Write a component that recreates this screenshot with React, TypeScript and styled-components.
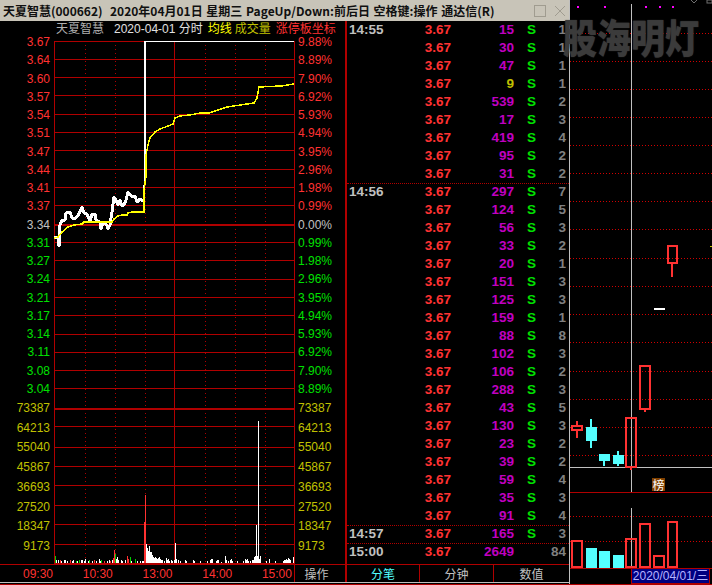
import styled, { createGlobalStyle } from "styled-components";

const RED = "#ff3232";
const GRID = "#b00000";
const GREEN = "#00e000";
const YELLOW = "#c0c000";
const MAGENTA = "#c000c0";
const GRAY = "#808080";
const SILVER = "#c0c0c0";
const CYAN = "#54ffff";

const GlobalStyle = createGlobalStyle`
  html, body {
    margin: 0;
    padding: 0;
    background: #000;
  }
`;

const Root = styled.div`
  position: relative;
  display: flex;
  width: 712px;
  height: 585px;
  box-sizing: border-box;
  overflow: hidden;
  background: #000;
  border-bottom: 1px solid ${GRID};
  font-family: "Liberation Sans", "Noto Sans CJK SC", sans-serif;
  font-size: 12px;
`;

const Popup = styled.div`
  display: flex;
  flex-direction: column;
  flex: none;
  width: 570px;
  height: 584px;
  box-sizing: border-box;
  padding-bottom: 1px;
  border-right: 1px solid ${SILVER};
`;

const TitleBar = styled.div`
  display: flex;
  align-items: center;
  flex: none;
  height: 21px;
  box-sizing: border-box;
  padding-left: 3px;
  background: #c8c4b8;
  color: #101010;
  font-family: "Noto Sans CJK SC", sans-serif;
  font-size: 12px;
  font-weight: 700;
  word-spacing: 1px;
  white-space: pre;
`;

const TitleControls = styled.div`
  display: flex;
  align-items: center;
  gap: 8px;
  margin-left: auto;
  padding-right: 3px;
`;

const Body = styled.div`
  display: flex;
  flex: none;
  height: 543px;
`;

const MinutePane = styled.div`
  display: flex;
  flex: none;
  width: 347px;
  box-sizing: border-box;
  border-right: 2px solid ${GRID};
`;

const Axis = styled.div<{ $side: "left" | "right" }>`
  display: flex;
  flex-direction: column;
  flex: none;
  width: ${(p) => (p.$side === "left" ? "54px" : "50px")};
  box-sizing: border-box;
  padding-top: 15px;
  ${(p) => (p.$side === "left" ? "padding-right: 4px; text-align: right;" : "padding-left: 3px;")}
`;

const AxisGroup = styled.div<{ $height: number; $gap?: number }>`
  display: flex;
  flex-direction: column;
  justify-content: space-between;
  height: ${(p) => p.$height}px;
  margin-top: ${(p) => p.$gap ?? 0}px;
`;

const AxisLabel = styled.div<{ $color: string }>`
  height: 12px;
  line-height: 12px;
  color: ${(p) => p.$color};
`;

const ChartColumn = styled.div`
  flex: none;
  width: 241px;
`;

const ChartHeader = styled.div`
  display: flex;
  align-items: center;
  height: 20px;
  box-sizing: border-box;
  padding: 0 0 4px 2px;
  line-height: 14px;
  white-space: nowrap;
`;

const HeaderText = styled.span<{ $color: string; $gap: number }>`
  flex: none;
  margin-right: ${(p) => p.$gap}px;
  color: ${(p) => p.$color};
`;

const ChartSvg = styled.svg`
  display: block;
`;

const TickPane = styled.div`
  flex: 1;
  min-width: 0;
`;

const TickRow = styled.div<{ $divided?: boolean }>`
  display: grid;
  grid-template-columns: 72px 33px 62px 21px 31px;
  height: 18px;
  box-sizing: border-box;
  line-height: 18px;
  font-size: 13.5px;
  font-weight: 700;
  ${(p) => p.$divided && `border-top: 1px dotted ${GRID}; line-height: 16px;`}
`;

const TickTime = styled.span`
  padding-left: 2px;
  color: ${SILVER};
`;

const TickPrice = styled.span`
  color: ${RED};
  text-align: right;
  padding-right: 1px;
`;

const TickVolume = styled.span<{ $small?: boolean }>`
  color: ${(p) => (p.$small ? YELLOW : MAGENTA)};
  text-align: right;
`;

const TickSide = styled.span`
  padding-left: 13px;
  color: ${GREEN};
`;

const TickCount = styled.span`
  color: ${GRAY};
  text-align: right;
`;

const Footer = styled.div`
  display: flex;
  flex: none;
  height: 19px;
  box-sizing: border-box;
  border-top: 1px solid ${GRID};
  border-bottom: 1px solid ${SILVER};
`;

const TimeBar = styled.div`
  display: flex;
  flex: none;
  width: 347px;
  box-sizing: border-box;
  border-right: 2px solid ${GRID};
`;

const TimeLabels = styled.div`
  display: flex;
  justify-content: space-between;
  align-items: center;
  flex: none;
  width: 295px;
  box-sizing: border-box;
  padding: 0 2px 0 23px;
  border-right: 1px solid ${GRID};
  color: ${RED};
`;

const FooterCell = styled.div<{ $color: string; $divider?: boolean; $inset?: number }>`
  display: flex;
  align-items: center;
  justify-content: center;
  flex: 1;
  padding-right: ${(p) => p.$inset ?? 0}px;
  color: ${(p) => p.$color};
  font-family: "Noto Sans CJK SC", sans-serif;
  ${(p) => p.$divider && `border-right: 1px solid ${GRID};`}
`;

const TickTabs = styled.div`
  display: grid;
  flex: 1;
  grid-template-columns: 73px 74px 1fr;
`;

const KlinePanel = styled.div`
  position: relative;
  flex: 1;
  min-width: 0;
`;

const Watermark = styled.div`
  position: absolute;
  left: 563px;
  top: 11px;
  color: rgba(60, 60, 60, 0.92);
  font-family: "Noto Sans CJK SC", sans-serif;
  font-size: 34px;
  font-weight: 900;
  line-height: 50px;
  white-space: nowrap;
  text-shadow: 0 0 1px rgba(60, 60, 60, 0.9);
  transform: scaleY(1.18);
  pointer-events: none;
`;

const RankBadge = styled.div`
  position: absolute;
  left: 82px;
  top: 478px;
  width: 13px;
  height: 13px;
  background: #804000;
  color: #fff;
  font-family: "Noto Sans CJK SC", sans-serif;
  font-size: 12px;
  line-height: 13px;
  text-align: center;
`;

const DateBadge = styled.div`
  position: absolute;
  left: 61px;
  top: 568px;
  width: 79px;
  height: 16px;
  box-sizing: border-box;
  border: 1px solid ${GRID};
  background: #000080;
  color: #b4b4ff;
  line-height: 14px;
  text-align: center;
  white-space: nowrap;
`;

const prices = ["3.67", "3.64", "3.60", "3.57", "3.54", "3.51", "3.47", "3.44", "3.41", "3.37", "3.34", "3.31", "3.27", "3.24", "3.21", "3.17", "3.14", "3.11", "3.08", "3.04"];
const percents = ["9.88%", "8.89%", "7.90%", "6.92%", "5.93%", "4.94%", "3.95%", "2.96%", "1.98%", "0.99%", "0.00%", "0.99%", "1.98%", "2.96%", "3.95%", "4.94%", "5.93%", "6.92%", "7.90%", "8.89%"];
const volumes = ["73387", "64213", "55040", "45867", "36693", "27520", "18347", "9173"];

const priceColor = (i: number) => (i < 10 ? RED : i === 10 ? SILVER : GREEN);

type Tick = [time: string, volume: number, side: string, count: number, divided?: boolean];

const ticks: Tick[] = [
  ["14:55", 15, "S", 1], ["", 30, "S", 1], ["", 47, "S", 1], ["", 9, "S", 1], ["", 539, "S", 2],
  ["", 17, "S", 3], ["", 419, "S", 4], ["", 95, "S", 2], ["", 31, "S", 2],
  ["14:56", 297, "S", 7, true], ["", 124, "S", 5], ["", 56, "S", 3], ["", 33, "S", 2], ["", 20, "S", 1],
  ["", 151, "S", 3], ["", 125, "S", 3], ["", 159, "S", 1], ["", 88, "S", 8], ["", 102, "S", 3],
  ["", 106, "S", 2], ["", 288, "S", 3], ["", 43, "S", 5], ["", 130, "S", 3], ["", 23, "S", 2],
  ["", 39, "S", 2], ["", 59, "S", 4], ["", 35, "S", 3], ["", 91, "S", 4],
  ["14:57", 165, "S", 3, true], ["15:00", 2649, "", 84, true],
];

const priceLines = [59, 77, 95, 114, 132, 150, 169, 187, 205, 242, 260, 279, 297, 315, 334, 352, 370, 388, 426, 447, 466, 485, 505, 524, 544];
const dottedX = [85, 115, 145, 205, 235, 265];

const whiteMorning = "54,237 58,237 59,246 60,225 62,220 65,220 66,213 70,212 72,218 76,218 79,214 82,207 84,213 87,214 90,221 92,214 95,214 96,220 100,222 101,229 103,222 107,225 108,229 110,225 112,212 114,197 116,200 118,205 120,200 122,206 124,205 126,200 128,192 131,196 135,196 137,202 140,199 143,201 144,200";
const whiteAfternoon = "144,200 145,170 145,41 294,41";
const yellowPath = "54,238 58,237 62,232 68,227 74,225 82,224 84,222 95,222 112,222 114,219 118,216 122,215 127,215 128,213 132,212 144,212 144,190 146,176 146,155 148,145 150,138 155,132 160,129 168,126 173,124 175,118 180,116 190,115 200,113 209,113 227,107 254,103 257,98 259,87 281,86 294,84";

// [x, height, colour] of the minute volume bars
const W = "#fff";
const R = RED;
const G = "#00d000";
const bars: [number, number, string][] = [
  [55, 7, G], [56, 3, W], [58, 3, W], [60, 3, R], [61, 2, W], [64, 3, W], [65, 3, W], [67, 2, W], [70, 3, R], [72, 2, W], [73, 3, W],
  [76, 2, G], [77, 2, W], [79, 3, G], [81, 3, W], [82, 3, W], [84, 2, W], [85, 4, W], [88, 2, W], [89, 3, G], [92, 2, W], [94, 3, R],
  [96, 2, W], [99, 4, W], [100, 2, W], [101, 3, G], [104, 2, R], [107, 2, W], [109, 3, W], [110, 2, R], [112, 3, W],
  [113, 5, R], [114, 13, R], [115, 9, G], [116, 4, W], [117, 6, W], [118, 3, W], [121, 3, W], [122, 2, W], [125, 3, W],
  [127, 7, R], [128, 4, R], [130, 6, G], [131, 2, W], [135, 4, G], [137, 2, W], [140, 2, W], [142, 2, W],
  [143, 2, W], [144, 41, R], [145, 68, R], [146, 19, W], [147, 15, W], [148, 12, W], [149, 17, W], [150, 11, W], [151, 11, W],
  [152, 8, W], [153, 6, W], [154, 5, W], [155, 6, W], [156, 5, W], [157, 4, W], [158, 5, W], [159, 6, W], [160, 4, W], [161, 3, W],
  [162, 3, W], [164, 2, W], [166, 5, W], [167, 3, W], [168, 4, W], [169, 2, W], [171, 3, W], [172, 2, W], [174, 3, W], [175, 20, W],
  [176, 4, W], [178, 3, W], [180, 2, W], [185, 3, W], [186, 2, W], [193, 3, W], [194, 2, W], [200, 2, W], [207, 2, W], [210, 3, W],
  [211, 4, W], [212, 4, W], [216, 2, W], [217, 3, W], [218, 3, W], [221, 1, W], [225, 7, W], [226, 3, W], [228, 2, W],
  [230, 3, W], [231, 4, W], [232, 2, W], [237, 2, W], [243, 2, W], [245, 4, W], [246, 3, W], [247, 4, W], [248, 2, W],
  [250, 2, W], [252, 3, W], [253, 3, W], [254, 6, W], [255, 7, W], [256, 38, W], [257, 7, W], [258, 142, W], [259, 4, W], [260, 7, W],
  [266, 2, W], [269, 4, W], [275, 2, W], [283, 2, W], [284, 3, W], [285, 3, W], [286, 4, W], [287, 3, W], [288, 5, W], [289, 4, W], [290, 3, W], [293, 6, W],
];

const klineRows = [33, 61, 89, 117, 145, 173, 201, 229, 258, 286, 314, 342, 371, 399, 427, 455, 516, 541];

function MinuteChart() {
  return (
    <ChartSvg width={241} height={523} viewBox="54 41 241 523" shapeRendering="crispEdges">
      {priceLines.map((y) => (
        <rect key={y} x={54} y={y} width={241} height={1} fill={GRID} />
      ))}
      <rect x={54} y={41} width={241} height={1} fill={GRID} />
      <rect x={54} y={224} width={241} height={2} fill={GRID} />
      <rect x={54} y={408} width={241} height={2} fill={GRID} />
      <rect x={54} y={563} width={241} height={1} fill={GRID} />
      {dottedX.map((x) => (
        <line key={x} x1={x + 0.5} x2={x + 0.5} y1={41} y2={564} stroke={GRID} strokeDasharray="1 3" />
      ))}
      <rect x={54} y={41} width={1} height={523} fill={GRID} />
      <rect x={174} y={41} width={1} height={523} fill={GRID} />
      <rect x={294} y={41} width={1} height={523} fill={GRID} />
      {bars.map(([x, h, c]) => (
        <rect key={x} x={x} y={563 - h} width={1} height={h} fill={c} />
      ))}
      <polyline points={whiteMorning} fill="none" stroke="#fff" strokeWidth={3} strokeLinejoin="round" />
      <polyline points={whiteAfternoon} fill="none" stroke="#fff" strokeWidth={2} />
      <polyline points={yellowPath} fill="none" stroke="#ffff00" strokeWidth={1.5} />
    </ChartSvg>
  );
}

// hollow red candle, given its outer box
function HollowBox({ x, y, w, h }: { x: number; y: number; w: number; h: number }) {
  return <rect x={x + 1} y={y + 1} width={w - 2} height={h - 2} fill="none" stroke={RED} strokeWidth={2} />;
}

function KlineChart() {
  return (
    <svg width={142} height={584} viewBox="570 0 142 584" style={{ display: "block" }}>
      {klineRows.map((y) => (
        <line key={y} x1={570} x2={712} y1={y + 0.5} y2={y + 0.5} stroke="#d00000" strokeDasharray="1 2" />
      ))}
      {[577, 604, 645, 659, 672].map((x) => (
        <rect key={x} x={x} y={6} width={2} height={2} fill="#ff00ff" />
      ))}
      <polyline points="691,0 694,3 697,0" fill="none" stroke="#707070" />
      <rect x={707} y={0} width={5} height={3} fill="none" stroke="#707070" />
      <rect x={631} y={4} width={1} height={488} fill={SILVER} />
      <rect x={631} y={508} width={1} height={60} fill={SILVER} />
      <rect x={570} y={467} width={142} height={1} fill={SILVER} />
      <rect x={570} y={492} width={142} height={1} fill={GRID} />
      <rect x={570} y={568} width={142} height={1} fill={GRID} />

      <rect x={576} y={421} width={2} height={17} fill={RED} />
      <rect x={571} y={425} width={12} height={6} fill="#000" />
      <HollowBox x={571} y={425} w={12} h={6} />
      <rect x={590} y={419} width={2} height={29} fill={CYAN} />
      <rect x={586} y={427} width={11} height={14} fill={CYAN} />
      <rect x={603} y={454} width={2} height={12} fill={CYAN} />
      <rect x={599} y={454} width={11} height={7} fill={CYAN} />
      <rect x={617} y={451} width={2} height={15} fill={CYAN} />
      <rect x={613} y={455} width={11} height={9} fill={CYAN} />
      <rect x={630} y={467} width={2} height={3} fill={RED} />
      <HollowBox x={625} y={417} w={12} h={51} />
      <HollowBox x={639} y={365} w={12} h={45} />
      <rect x={644} y={410} width={2} height={2} fill={RED} />
      <rect x={654} y={308} width={11} height={2} fill="#fff" />
      <HollowBox x={667} y={245} w={11} h={19} />
      <rect x={671} y={264} width={2} height={13} fill={RED} />
      <rect x={710} y={246} width={2} height={1} fill={YELLOW} />

      <HollowBox x={571} y={540} w={12} h={28} />
      <rect x={586} y={548} width={11} height={20} fill={CYAN} />
      <rect x={599} y={551} width={11} height={17} fill={CYAN} />
      <rect x={613} y={555} width={11} height={13} fill={CYAN} />
      <HollowBox x={625} y={538} w={12} h={30} />
      <HollowBox x={639} y={523} w={12} h={45} />
      <HollowBox x={653} y={555} w={12} h={13} />
      <HollowBox x={667} y={521} w={11} h={47} />
    </svg>
  );
}

export default function App() {
  return (
    <Root>
      <GlobalStyle />
      <Popup>
        <TitleBar>
          天夏智慧(000662)  2020年04月01日 星期三 PageUp/Down:前后日 空格键:操作 通达信(R)
          <TitleControls>
            <svg width={12} height={12} viewBox="0 0 12 12">
              <rect x={0.5} y={0.5} width={11} height={11} fill="none" stroke="#a09c90" />
            </svg>
            <svg width={12} height={12} viewBox="0 0 12 12">
              <path d="M1 1 L11 11 M11 1 L1 11" stroke="#a09c90" />
            </svg>
          </TitleControls>
        </TitleBar>
        <Body>
          <MinutePane>
            <Axis $side="left">
              <AxisGroup $height={359}>
                {prices.map((p, i) => (
                  <AxisLabel key={i} $color={priceColor(i)}>{p}</AxisLabel>
                ))}
              </AxisGroup>
              <AxisGroup $height={150} $gap={7}>
                {volumes.map((v) => (
                  <AxisLabel key={v} $color={YELLOW}>{v}</AxisLabel>
                ))}
              </AxisGroup>
            </Axis>
            <ChartColumn>
              <ChartHeader>
                <HeaderText $color="#b0b0b0" $gap={10}>天夏智慧</HeaderText>
                <HeaderText $color="#e0e0e0" $gap={5}>2020-04-01 分时</HeaderText>
                <HeaderText $color="#ffff00" $gap={3}>均线</HeaderText>
                <HeaderText $color={YELLOW} $gap={5}>成交量</HeaderText>
                <HeaderText $color={RED} $gap={0}>涨停板坐标</HeaderText>
              </ChartHeader>
              <MinuteChart />
            </ChartColumn>
            <Axis $side="right">
              <AxisGroup $height={359}>
                {percents.map((p, i) => (
                  <AxisLabel key={i} $color={priceColor(i)}>{p}</AxisLabel>
                ))}
              </AxisGroup>
              <AxisGroup $height={150} $gap={7}>
                {volumes.map((v) => (
                  <AxisLabel key={v} $color={YELLOW}>{v}</AxisLabel>
                ))}
              </AxisGroup>
            </Axis>
          </MinutePane>
          <TickPane>
            {ticks.map(([time, volume, side, count, divided], i) => (
              <TickRow key={i} $divided={divided}>
                <TickTime>{time}</TickTime>
                <TickPrice>3.67</TickPrice>
                <TickVolume $small={volume < 10}>{volume}</TickVolume>
                <TickSide>{side}</TickSide>
                <TickCount>{count}</TickCount>
              </TickRow>
            ))}
          </TickPane>
        </Body>
        <Footer>
          <TimeBar>
            <TimeLabels>
              <span>09:30</span>
              <span>10:30</span>
              <span>13:00</span>
              <span>14:00</span>
              <span>15:00</span>
            </TimeLabels>
            <FooterCell $color={SILVER} $inset={7}>操作</FooterCell>
          </TimeBar>
          <TickTabs>
            <FooterCell $color={CYAN} $divider>分笔</FooterCell>
            <FooterCell $color={SILVER} $divider>分钟</FooterCell>
            <FooterCell $color={SILVER}>数值</FooterCell>
          </TickTabs>
        </Footer>
      </Popup>
      <KlinePanel>
        <KlineChart />
        <RankBadge>榜</RankBadge>
        <DateBadge>2020/04/01/三</DateBadge>
      </KlinePanel>
      <Watermark>股海明灯</Watermark>
    </Root>
  );
}
